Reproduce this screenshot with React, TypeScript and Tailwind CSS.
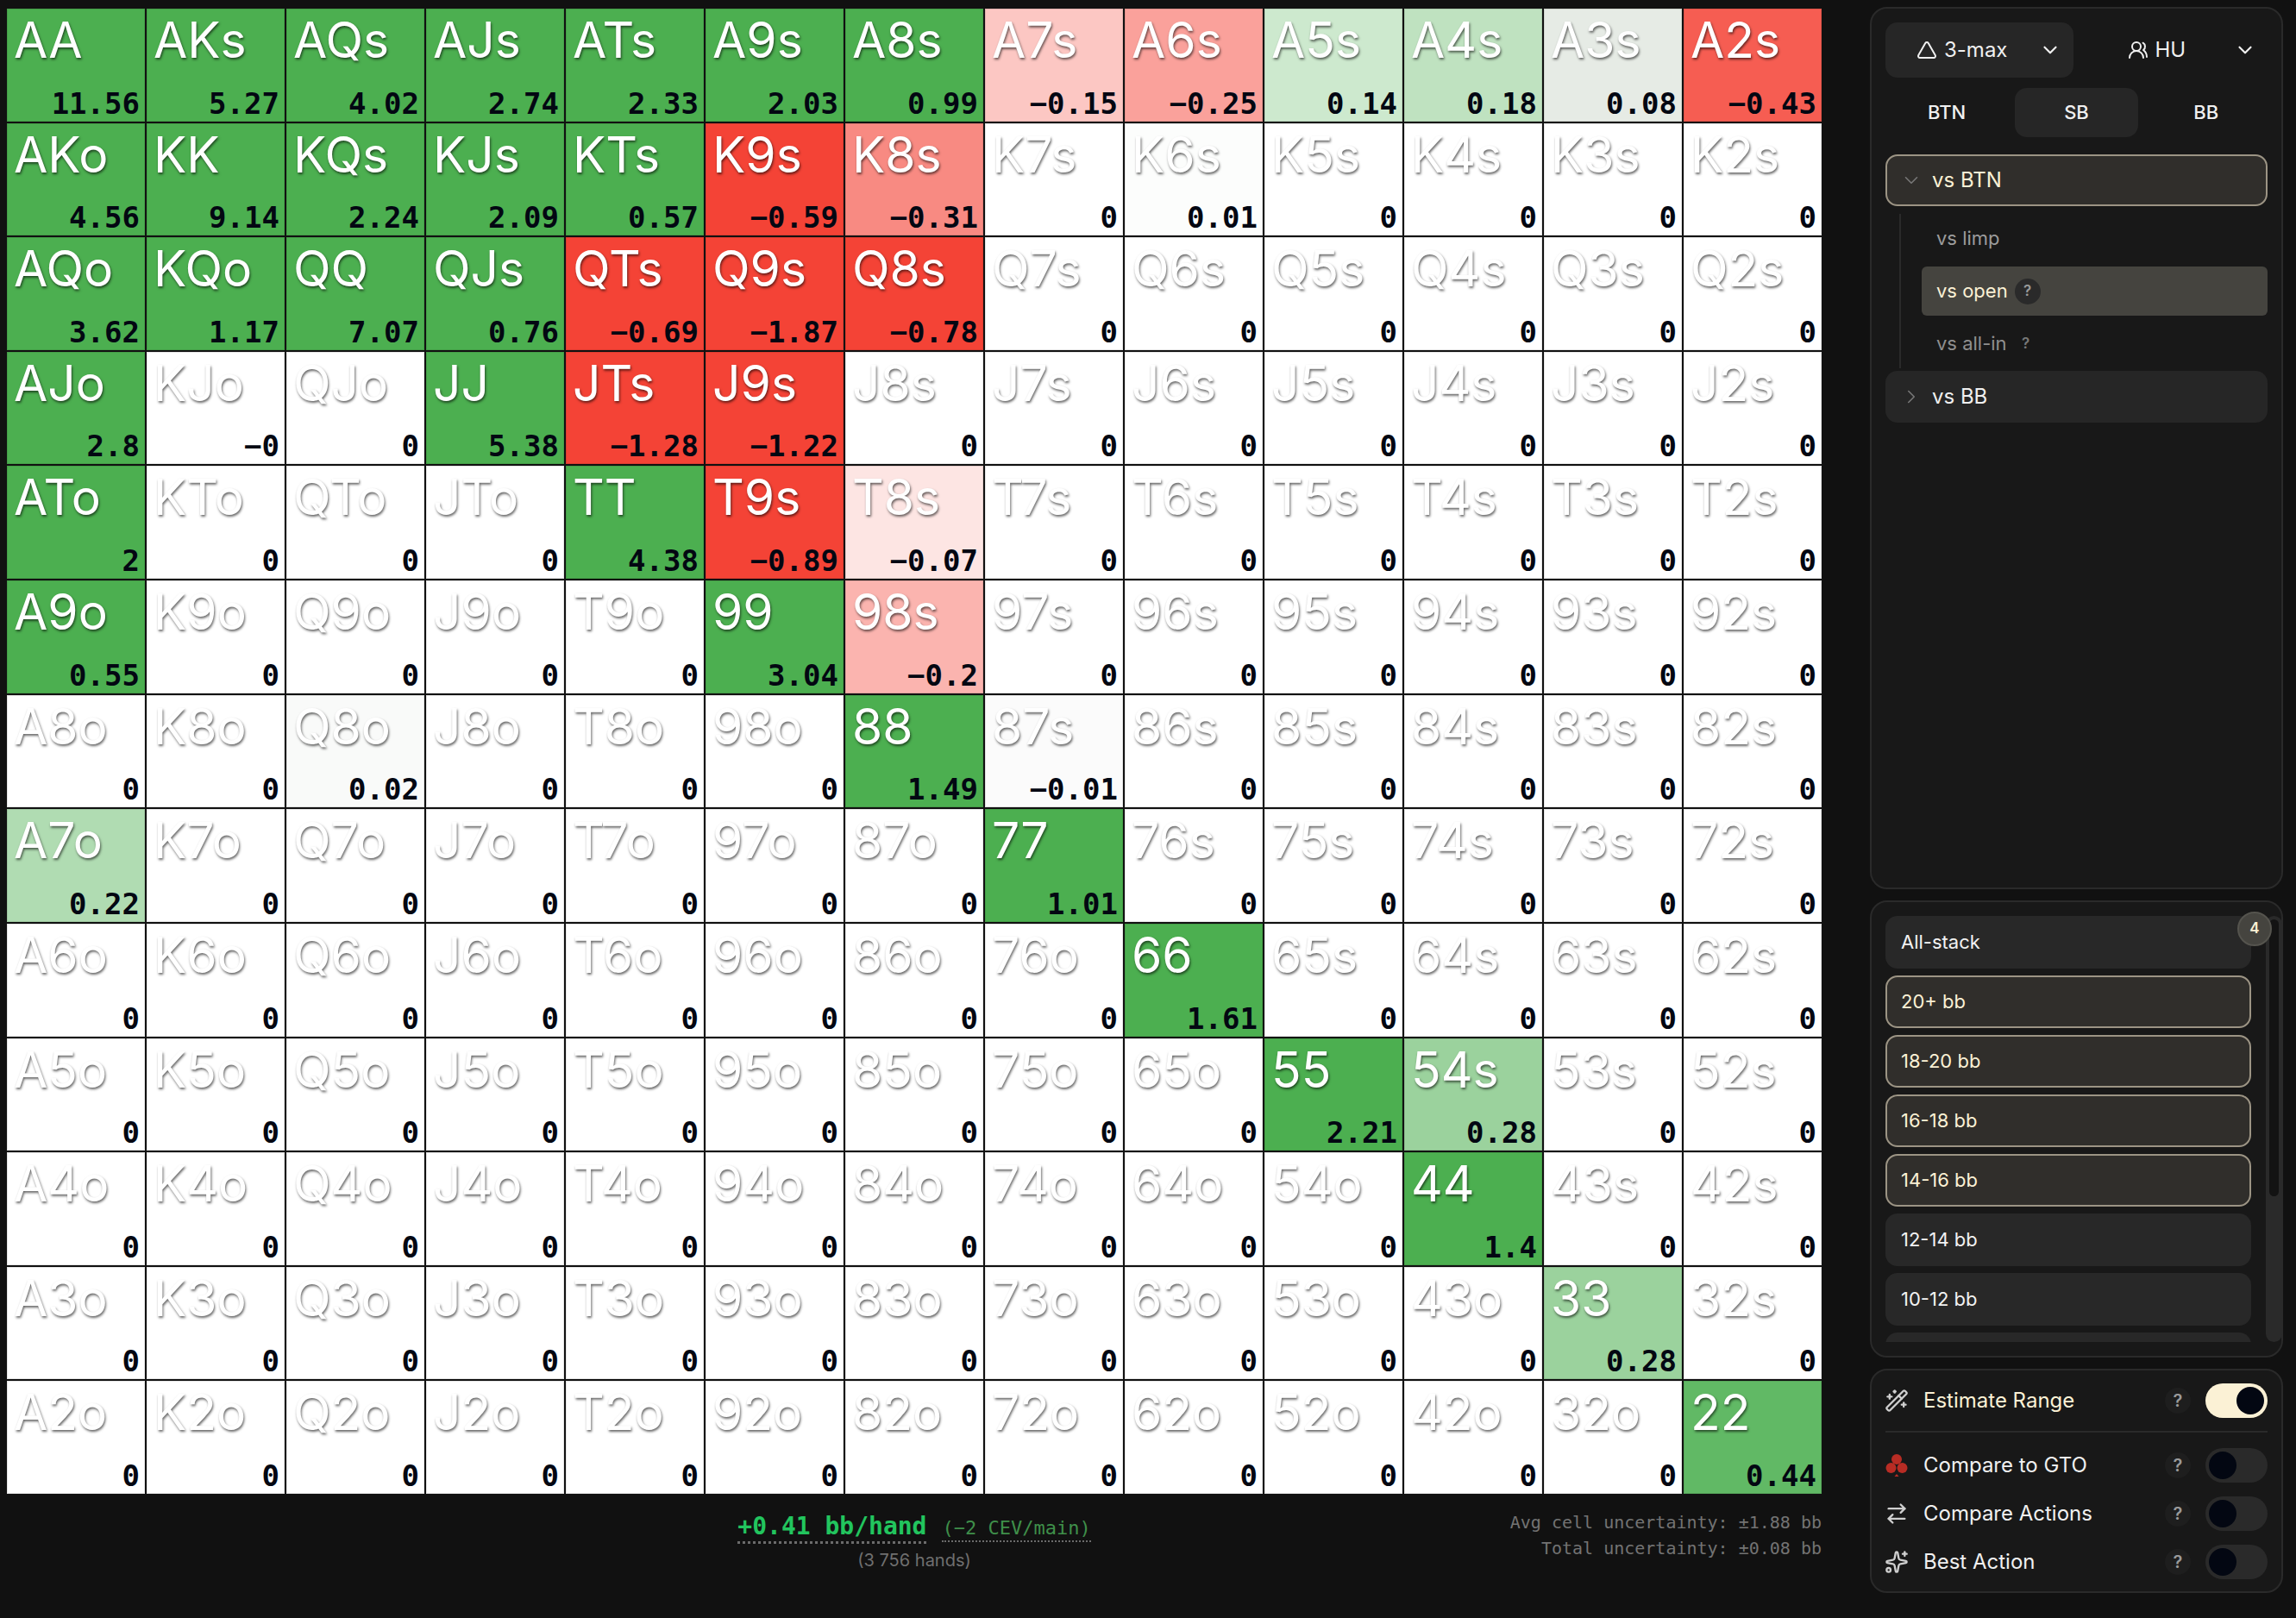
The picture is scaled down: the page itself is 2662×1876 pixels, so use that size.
import { ArrowRightLeft, ChevronDown, ChevronRight, Sparkles, Triangle, UsersRound, WandSparkles } from "lucide-react";
import type { ReactNode } from "react";

const RANKS = ["A", "K", "Q", "J", "T", "9", "8", "7", "6", "5", "4", "3", "2"];

const VALUES: string[][] = [
  ["11.56", "5.27", "4.02", "2.74", "2.33", "2.03", "0.99", "−0.15", "−0.25", "0.14", "0.18", "0.08", "−0.43"],
  ["4.56", "9.14", "2.24", "2.09", "0.57", "−0.59", "−0.31", "0", "0.01", "0", "0", "0", "0"],
  ["3.62", "1.17", "7.07", "0.76", "−0.69", "−1.87", "−0.78", "0", "0", "0", "0", "0", "0"],
  ["2.8", "−0", "0", "5.38", "−1.28", "−1.22", "0", "0", "0", "0", "0", "0", "0"],
  ["2", "0", "0", "0", "4.38", "−0.89", "−0.07", "0", "0", "0", "0", "0", "0"],
  ["0.55", "0", "0", "0", "0", "3.04", "−0.2", "0", "0", "0", "0", "0", "0"],
  ["0", "0", "0.02", "0", "0", "0", "1.49", "−0.01", "0", "0", "0", "0", "0"],
  ["0.22", "0", "0", "0", "0", "0", "0", "1.01", "0", "0", "0", "0", "0"],
  ["0", "0", "0", "0", "0", "0", "0", "0", "1.61", "0", "0", "0", "0"],
  ["0", "0", "0", "0", "0", "0", "0", "0", "0", "2.21", "0.28", "0", "0"],
  ["0", "0", "0", "0", "0", "0", "0", "0", "0", "0", "1.4", "0", "0"],
  ["0", "0", "0", "0", "0", "0", "0", "0", "0", "0", "0", "0.28", "0"],
  ["0", "0", "0", "0", "0", "0", "0", "0", "0", "0", "0", "0", "0.44"],
];

function cellLabel(r: number, c: number) {
  if (r === c) return RANKS[r] + RANKS[c];
  return r < c ? RANKS[r] + RANKS[c] + "s" : RANKS[c] + RANKS[r] + "o";
}

function cellColor(text: string) {
  const v = parseFloat(text.replace("−", "-"));
  const abs = Math.abs(v);
  if (v > 0 && v < 0.1) {
    const t = v / 0.08;
    return `rgb(${Math.round(255 - 25 * t)},${Math.round(255 - 20 * t)},${Math.round(255 - 26 * t)})`;
  }
  if (v < 0 && abs < 0.02) return "rgb(251,251,251)";
  const a = Math.min(abs / 0.5, 1);
  const [r, g, b] = v >= 0 ? [76, 175, 80] : [244, 67, 54];
  const mix = (x: number) => Math.round(255 + (x - 255) * a);
  return `rgb(${mix(r)},${mix(g)},${mix(b)})`;
}

function Cell({ label, value }: { label: string; value: string }) {
  return (
    <div
      className="flex flex-col justify-between overflow-hidden border border-black/10 pl-[7px] pr-[5px]"
      style={{ backgroundColor: cellColor(value) }}
    >
      <div className="font-['Inter',sans-serif] text-[57px] leading-[72px] text-white [text-shadow:1px_2px_3px_rgba(0,0,0,0.6)]">
        {label}
      </div>
      <div className="text-right font-['DejaVu_Sans_Mono',monospace] text-[34px] font-bold leading-[40px] text-[#030712]">
        {value}
      </div>
    </div>
  );
}

function Help({ dark, className = "" }: { dark?: boolean; className?: string }) {
  return (
    <span
      className={`flex h-[30px] w-[30px] shrink-0 items-center justify-center rounded-full font-semibold ${
        dark ? "bg-[#2a2a2a] text-[17px] text-[#9a9a9a]" : "bg-[#1e1e1e] text-[20px] text-[#9a9a9a]"
      } ${className}`}
    >
      ?
    </span>
  );
}

function Panel({ className, children }: { className: string; children: ReactNode }) {
  return <section className={`rounded-[20px] border-2 border-[#2a2a2a] bg-[#181818] ${className}`}>{children}</section>;
}

function RangeRow({ label, on }: { label: string; on?: boolean }) {
  return (
    <div
      className={`flex h-[61px] shrink-0 items-center rounded-[14px] text-[22px] ${
        on ? "border-2 border-[#9c9484] bg-[#302e2b] pl-[16px] text-[#fbf1d5]" : "bg-[#282828] pl-[18px] text-[#f2f2f2]"
      }`}
    >
      {label}
    </div>
  );
}

function ClubsIcon() {
  return (
    <svg width="26" height="28" viewBox="0 0 26 28" fill="#b82c24">
      <circle cx="13" cy="7" r="6" />
      <circle cx="6.5" cy="17" r="6" />
      <circle cx="19.5" cy="17" r="6" />
      <path d="M13 24l2.5 3h-5z" />
    </svg>
  );
}

function Toggle({ icon, label, on }: { icon: ReactNode; label: string; on?: boolean }) {
  return (
    <div className="flex h-[56px] items-center">
      <span className="flex w-[44px] shrink-0 items-center text-[#cfcfcf]">{icon}</span>
      <span className={`flex-1 text-[24px] ${on ? "text-[#fbf1d5]" : "text-[#f0f0f0]"}`}>{label}</span>
      <Help className="mr-[17px]" />
      <span
        className={`flex h-[40px] w-[72px] items-center rounded-full p-[4px] ${
          on ? "justify-end bg-[#fbf1d5]" : "justify-start bg-[#2a2a2a]"
        }`}
      >
        <span className="h-[32px] w-[32px] rounded-full bg-[#030712]" />
      </span>
    </div>
  );
}

export default function App() {
  return (
    <div className="flex h-[1876px] w-[2662px] overflow-hidden bg-[#111111] font-['Inter',sans-serif]">
      <main className="w-[2112px] shrink-0 pl-[8px] pt-[10px]">
        <div className="grid h-[1722px] w-[2104px] grid-cols-[repeat(13,160px)] grid-rows-[repeat(13,minmax(0,1fr))] gap-[2px]">
          {VALUES.map((row, r) =>
            row.map((value, c) => <Cell key={`${r}-${c}`} label={cellLabel(r, c)} value={value} />),
          )}
        </div>
        <footer className="grid grid-cols-[1fr_auto_1fr] pt-[21px]">
          <div />
          <div className="flex flex-col items-center">
            <div className="flex items-baseline gap-[18px] font-['DejaVu_Sans_Mono',monospace]">
              <span className="border-b-[3px] border-dotted border-[#6b6b6b] text-[28px] font-bold leading-[34px] text-[#22c55e]">
                +0.41 bb/hand
              </span>
              <span className="border-b-2 border-dotted border-[#6b6b6b] text-[22px] leading-[28px] text-[#3f8f4a]">
                (−2 CEV/main)
              </span>
            </div>
            <div className="mt-[5px] text-[20px] leading-[28px] text-[#6f6f6f]">(3 756 hands)</div>
          </div>
          <div className="mt-[-3px] text-right font-['DejaVu_Sans_Mono',monospace] text-[20px] leading-[30px] text-[#737373]">
            <div>Avg cell uncertainty: ±1.88 bb</div>
            <div>Total uncertainty: ±0.08 bb</div>
          </div>
        </footer>
      </main>

      <aside className="ml-[56px] flex w-[479px] shrink-0 flex-col gap-[13px] pt-[8px]">
        <Panel className="h-[1023px] px-[16px] pt-[16px]">
          <div className="grid grid-cols-2 gap-[8px]">
            <div className="flex h-[64px] items-center rounded-[14px] bg-[#262626] pl-[36px] pr-[14px] text-[24px] text-[#f0f0f0]">
              <Triangle size={24} strokeWidth={2} className="mr-[8px] shrink-0" />
              <span className="flex-1">3-max</span>
              <ChevronDown size={26} strokeWidth={2} className="shrink-0" />
            </div>
            <div className="flex h-[64px] items-center rounded-[14px] pl-[55px] pr-[13px] text-[24px] text-[#f0f0f0]">
              <UsersRound size={24} strokeWidth={2} className="mr-[8px] shrink-0" />
              <span className="flex-1">HU</span>
              <ChevronDown size={26} strokeWidth={2} className="shrink-0" />
            </div>
          </div>

          <div className="mt-[12px] grid grid-cols-3 gap-[8px] text-[22px] font-medium text-[#f0f0f0]">
            <div className="flex h-[57px] items-center justify-center rounded-[14px]">BTN</div>
            <div className="flex h-[57px] items-center justify-center rounded-[14px] bg-[#262626]">SB</div>
            <div className="flex h-[57px] items-center justify-center rounded-[14px]">BB</div>
          </div>

          <div className="mt-[20px] flex h-[60px] items-center rounded-[14px] border-2 border-[#9c9484] bg-[#302e2b] pl-[15px] text-[24px] text-[#fbf1d5]">
            <ChevronDown size={26} strokeWidth={1.5} className="mr-[11px] text-[#777777]" />
            vs BTN
          </div>

          <div className="ml-[16px] mt-[9px] flex flex-col gap-[4px] border-l-2 border-[#2a2a2a] pl-[24px] text-[22px]">
            <div className="flex h-[57px] items-center pl-[17px] text-[#9c9c9c]">vs limp</div>
            <div className="flex h-[57px] items-center gap-[8px] rounded-[6px] bg-[#45443f] pl-[17px] text-[#fbf1d5]">
              vs open
              <Help dark />
            </div>
            <div className="flex h-[57px] items-center gap-[8px] pl-[17px] text-[#8f8f8f]">
              vs all-in
              <span className="flex h-[28px] w-[28px] items-center justify-center text-[17px] font-semibold text-[#777777]">?</span>
            </div>
          </div>

          <div className="mt-[3px] flex h-[60px] items-center rounded-[14px] bg-[#262626] pl-[17px] text-[24px] text-[#f0f0f0]">
            <ChevronRight size={26} strokeWidth={1.5} className="mr-[11px] text-[#777777]" />
            vs BB
          </div>
        </Panel>

        <Panel className="flex h-[530px] gap-[17px] pb-[16px] pl-[16px] pt-[16px]">
          <div className="relative h-[494px] w-[424px] shrink-0">
            <div className="flex h-full flex-col gap-[8px] overflow-hidden">
              <RangeRow label="All-stack" />
              <RangeRow label="20+ bb" on />
              <RangeRow label="18-20 bb" on />
              <RangeRow label="16-18 bb" on />
              <RangeRow label="14-16 bb" on />
              <RangeRow label="12-14 bb" />
              <RangeRow label="10-12 bb" />
              <div className="h-[61px] shrink-0 rounded-[14px] bg-[#282828]" />
            </div>
            <span className="absolute right-[-24px] top-[-5px] flex h-[40px] w-[40px] items-center justify-center rounded-full border-2 border-[#55544e] bg-[#45443f] text-[17px] font-semibold text-[#fbf1d5]">
              4
            </span>
          </div>
          <div className="h-[494px] w-[19px] shrink-0 rounded-full bg-[#2a2a2a] p-[4px]">
            <div className="h-[321px] rounded-full bg-[#131313]" />
          </div>
        </Panel>

        <Panel className="h-[260px] px-[16px] pt-[7px]">
          <Toggle icon={<WandSparkles size={28} strokeWidth={2} className="-ml-[1px]" />} label="Estimate Range" on />
          <div className="mb-[10px] mt-[7px] h-[2px] bg-[#2a2a2a]" />
          <Toggle icon={<ClubsIcon />} label="Compare to GTO" />
          <Toggle icon={<ArrowRightLeft size={28} strokeWidth={2} className="-ml-[1px]" />} label="Compare Actions" />
          <Toggle icon={<Sparkles size={28} strokeWidth={2} className="-ml-[1px]" />} label="Best Action" />
        </Panel>
      </aside>
    </div>
  );
}
